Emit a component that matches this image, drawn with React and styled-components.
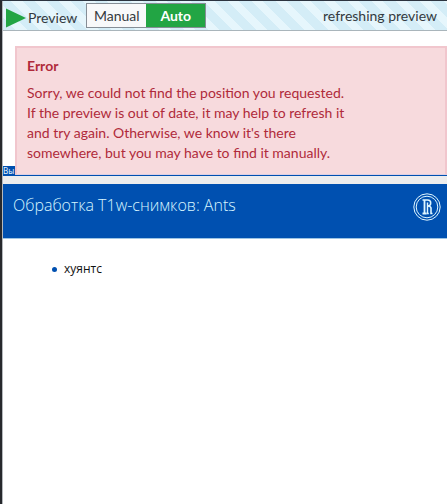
import { useState } from "react";
import styled, { createGlobalStyle } from "styled-components";

const modes = ["Manual", "Auto"];

const App = () => {
    const [mode, setMode] = useState("Auto");
    return (
        <Panel>
            <GlobalStyle />
            <Toolbar>
                <PreviewButton type="button">
                    <svg width="20" height="20" viewBox="0 0 20 20" aria-hidden="true">
                        <path d="M0 0.5 L20 10 L0 19.5 Z" fill="#22a544" />
                    </svg>
                    Preview
                </PreviewButton>
                <ModeGroup>
                    {modes.map((name) => (
                        <ModeButton key={name} type="button" $active={name === mode} aria-pressed={name === mode} onClick={() => setMode(name)}>
                            {name}
                        </ModeButton>
                    ))}
                </ModeGroup>
                <Status role="status">refreshing preview</Status>
            </Toolbar>
            <PreviousPage>
                <PageFooter>Вы</PageFooter>
                <Alert role="alert">
                    <AlertTitle>Error</AlertTitle>
                    <AlertText>
                        Sorry, we could not find the position you requested. If the preview is out of date, it may help to refresh it and try again. Otherwise, we know it's there somewhere, but you may have to find it manually.
                    </AlertText>
                </Alert>
            </PreviousPage>
            <Slide>
                <SlideHeader>
                    <SlideTitle>Обработка T1w-снимков: Ants</SlideTitle>
                    <Emblem />
                </SlideHeader>
                <SlideList>
                    <li>хуянтс</li>
                </SlideList>
            </Slide>
        </Panel>
    );
}

const Emblem = () => (
    <svg width="28" height="28" viewBox="0 0 28 28" fill="none" stroke="#dff6ff" aria-hidden="true">
        <circle cx="14" cy="14" r="13.2" strokeWidth="1" />
        <circle cx="14" cy="14" r="10.8" strokeWidth="1" />
        <path d="M9.5 7 H14.5 C18.8 7 18.8 13 14.5 13" strokeWidth="1.5" />
        <path d="M11.5 7 V20.5 M9.5 20.5 H13.5" strokeWidth="1.8" />
        <path d="M14.5 9.5 V20.5 M13.5 20.5 H15.8" strokeWidth="1.4" />
        <path d="M15 13 C18.2 13.2 18.2 15 18 17 V20.5 H19.5" strokeWidth="1.6" />
    </svg>
);

const GlobalStyle = createGlobalStyle`
*{
    box-sizing: border-box;
}
body{
    margin: 0;
    background: #fff;
    font-family: Lato, "Noto Sans", sans-serif;
    font-size: 14px;
    line-height: 20px;
    color: #343a40;
}
`;

const Panel = styled.main`
min-height: 100vh;
overflow: hidden;
border-top: 1px solid #2c3440;
border-left: 2px solid #26282c;
box-shadow: inset 1px 0 0 #b4b8bc;
padding-left: 1px;
`;

const Toolbar = styled.header`
display: flex;
align-items: center;
height: 30px;
padding: 0 10px 0 3px;
border-bottom: 1px solid #a9b5bb;
background: repeating-linear-gradient(45deg, #d4edf7 0 9px, #e6f6fc 9px 17px);
`;

const PreviewButton = styled.button`
display: flex;
align-items: center;
gap: 2px;
padding: 4px 0 0;
border: 0;
background: transparent;
color: inherit;
font: inherit;
cursor: pointer;
`;

const ModeGroup = styled.div`
display: flex;
width: 120px;
height: 25px;
margin-left: 9px;
border: 1px solid #868e96;
`;

const ModeButton = styled.button`
flex: 1;
padding: 0;
border: 0;
background: ${({ $active }) => ($active ? "#22a544" : "#f8f9fa")};
color: ${({ $active }) => ($active ? "#fff" : "#343a40")};
font: inherit;
font-weight: ${({ $active }) => ($active ? 700 : 400)};
cursor: pointer;
`;

const Status = styled.span`
margin-left: auto;
`;

const PreviousPage = styled.section`
display: grid;
padding-top: 15px;
`;

const PageFooter = styled.div`
grid-area: 1 / 1;
align-self: end;
height: 10px;
background: #0050b0;
color: #e6f6ff;
font: 8px/9px "Noto Sans", sans-serif;
`;

const Alert = styled.div`
grid-area: 1 / 1;
margin: 0 0 1px 12px;
padding: 8px 10px 11px;
border: 2px solid #f1c6cd;
border-bottom: 1px solid #dcd0e4;
background: #f7dadd;
color: #b02a3a;
`;

const AlertTitle = styled.h2`
margin: 0 0 7px;
font-size: 14px;
line-height: 20px;
`;

const AlertText = styled.p`
max-width: 320px;
margin: 0;
`;

const Slide = styled.section`
border-top: 8px solid #ededed;
`;

const SlideHeader = styled.div`
display: flex;
align-items: flex-start;
justify-content: space-between;
height: 55px;
padding: 9px 6px 0 10px;
border-bottom: 1px solid #9cc4e4;
background: #0050b0;
`;

const SlideTitle = styled.h1`
margin: 0;
color: #d8f6ff;
font: 300 16px/24px "Open Sans", "Noto Sans", sans-serif;
`;

const SlideList = styled.ul`
margin: 0;
padding: 20px 10px 20px 61px;
color: #111;
font: 12px/20px "Open Sans", "Noto Sans", sans-serif;
list-style: none;
li{
    display: flex;
    align-items: center;
}
li::before{
    content: "";
    width: 5px;
    height: 5px;
    margin: 0 7px 0 -12px;
    border-radius: 50%;
    background: #0050b0;
}
`;

export default App;
